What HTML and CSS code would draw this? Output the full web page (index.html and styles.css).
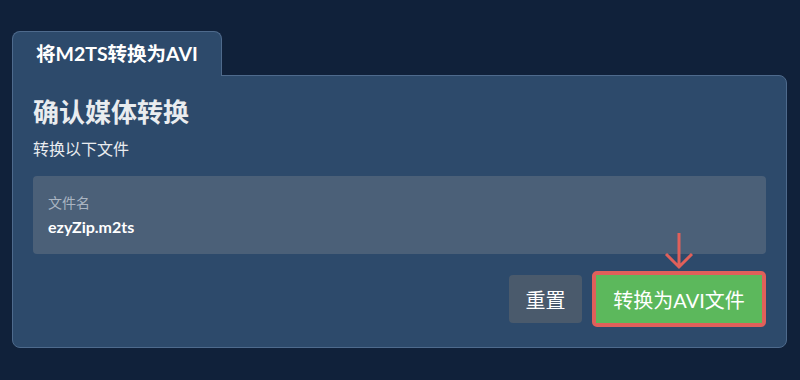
FILE: index.html
```html
<!DOCTYPE html>
<html lang="zh">
<head>
    <meta charset="UTF-8">
    <meta name="viewport" content="width=device-width, initial-scale=1.0">
    <title>将M2TS转换为AVI</title>
    <link rel="stylesheet" href="styles.css">
</head>
<body>
    <div class="tabs">
        <div class="tab">将M2TS转换为AVI</div>
    </div>

    <div class="panel">
        <h2>确认媒体转换</h2>
        <p class="subtitle">转换以下文件</p>

        <div class="file-box">
            <div class="file-label">文件名</div>
            <div class="file-name">ezyZip.m2ts</div>
        </div>

        <div class="actions">
            <button class="reset">重置</button>
            <span class="highlight">
                <svg class="arrow" width="30" height="38" viewBox="0 0 30 38">
                    <path d="M15 0 V34 M2 21 L15 34 L28 21" fill="none" stroke="#e0605a" stroke-width="3"/>
                </svg>
                <button class="convert">转换为AVI文件</button>
            </span>
        </div>
    </div>
</body>
</html>
```

FILE: styles.css
```css
body {
    margin: 0;
    padding: 31px 12px 0;
    background-color: #10213a;
    font-family: Lato, "Noto Sans CJK SC", sans-serif;
    color: #e9ecef;
}
.tabs {
    display: flex;
}
.tab {
    position: relative;
    z-index: 1;
    margin-bottom: -1px;
    padding: 0 23px;
    width: 210px;
    box-sizing: border-box;
    height: 45px;
    line-height: 44px;
    font-size: 19.5px;
    font-weight: bold;
    color: #ffffff;
    white-space: nowrap;
    background-color: #2d4a6b;
    border: 1px solid #4e6a8c;
    border-bottom: none;
    border-radius: 8px 8px 0 0;
}
.panel {
    width: 775px;
    box-sizing: border-box;
    padding: 20px;
    background-color: #2d4a6b;
    border: 1px solid #4e6a8c;
    border-radius: 0 8px 8px 8px;
}
h2 {
    margin: 0;
    font-size: 26px;
    line-height: 32px;
    font-weight: bold;
    color: #e9ecef;
}
.subtitle {
    margin: 11px 0 0;
    font-size: 16px;
    line-height: 20px;
}
.file-box {
    margin-top: 17px;
    padding: 18px 15px 16px;
    background-color: #4b6078;
    border-radius: 4px;
}
.file-label {
    font-size: 14px;
    line-height: 18px;
    color: #aab5c2;
}
.file-name {
    margin-top: 4px;
    font-size: 16px;
    line-height: 22px;
    font-weight: bold;
    color: #ffffff;
}
.actions {
    display: flex;
    justify-content: flex-end;
    align-items: center;
    gap: 10px;
    margin-top: 17px;
}
button {
    height: 48px;
    padding: 0;
    font-family: inherit;
    font-size: 20px;
    color: #ffffff;
    border: none;
    border-radius: 4px;
    cursor: pointer;
    white-space: nowrap;
}
.reset {
    width: 73px;
    background-color: #4a5a6c;
}
.highlight {
    position: relative;
    display: flex;
    border: 4px solid #e0605a;
    border-radius: 5px;
}
.convert {
    width: 166px;
    border-radius: 0;
    background-color: #5cb85c;
}
.arrow {
    position: absolute;
    left: 68px;
    top: -42px;
}
```
